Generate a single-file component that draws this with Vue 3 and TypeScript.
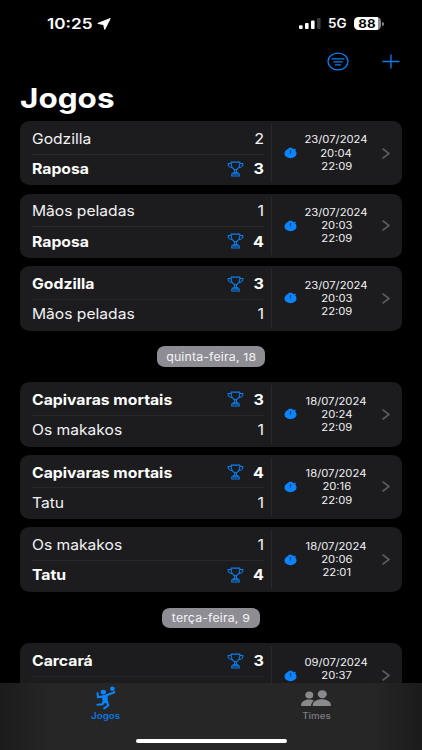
<script setup lang="ts">
interface Team {
  name: string
  score: number
  winner?: boolean
}
interface Match {
  teams: Team[]
  date: string
  start: string
  end: string
}
interface Group {
  label?: string
  matches: Match[]
}

const match = (a: Team, b: Team, date: string, start: string, end: string): Match => ({
  teams: [a, b],
  date,
  start,
  end,
})
const lost = (name: string, score: number): Team => ({ name, score })
const won = (name: string, score: number): Team => ({ name, score, winner: true })

const groups: Group[] = [
  {
    matches: [
      match(lost('Godzilla', 2), won('Raposa', 3), '23/07/2024', '20:04', '22:09'),
      match(lost('Mãos peladas', 1), won('Raposa', 4), '23/07/2024', '20:03', '22:09'),
      match(won('Godzilla', 3), lost('Mãos peladas', 1), '23/07/2024', '20:03', '22:09'),
    ],
  },
  {
    label: 'quinta-feira, 18',
    matches: [
      match(won('Capivaras mortais', 3), lost('Os makakos', 1), '18/07/2024', '20:24', '22:09'),
      match(won('Capivaras mortais', 4), lost('Tatu', 1), '18/07/2024', '20:16', '22:09'),
      match(lost('Os makakos', 1), won('Tatu', 4), '18/07/2024', '20:06', '22:01'),
    ],
  },
  {
    label: 'terça-feira, 9',
    matches: [
      match(won('Carcará', 3), lost('Tatu', 1), '09/07/2024', '20:37', '22:09'),
    ],
  },
]
</script>

<template>
  <div class="phone">
    <header class="status">
      <div class="clock">
        <span class="time">10:25</span>
        <svg class="location" viewBox="0 0 14 12"><path d="M13.2.6 7.7 11.4 6.7 6.6.8 5.4Z" /></svg>
      </div>
      <div class="indicators">
        <svg class="signal" viewBox="0 0 22 12">
          <rect x="0" y="7.3" width="3.6" height="3.7" rx="1" />
          <rect x="6" y="5" width="3.6" height="6" rx="1" />
          <rect x="12" y="2.6" width="3.6" height="8.4" rx="1" />
          <rect class="dim" x="18" y="0" width="3.6" height="11" rx="1" />
        </svg>
        <span class="network">5G</span>
        <div class="battery"><span>88</span></div>
        <i class="battery-tip"></i>
      </div>
    </header>

    <nav class="toolbar">
      <svg class="filter" viewBox="0 0 22 19">
        <ellipse cx="11" cy="9.5" rx="10" ry="8.4" />
        <path d="M5 6.8h12M6.9 9.9h8.2M8.6 12.9h4.8" />
      </svg>
      <svg class="plus" viewBox="0 0 18 15"><path d="M9 1v13M1 7.5h16" /></svg>
    </nav>

    <h1><span>Jogos</span></h1>

    <main>
      <section v-for="(group, g) in groups" :key="g">
        <div v-if="group.label" class="day"><span>{{ group.label }}</span></div>
        <article v-for="(item, m) in group.matches" :key="m" class="card">
          <div class="teams">
            <div v-for="team in item.teams" :key="team.name" class="team" :class="{ winner: team.winner }">
              <span class="name">{{ team.name }}</span>
              <svg v-if="team.winner" class="trophy" viewBox="0 0 18 16">
                <path d="M4.3.7h9.4c0 4.1-1.2 8-4.7 8S4.3 4.8 4.3.7Z" />
                <path d="M4.3 2.1H1.1c0 2.6 1.6 4.4 4.4 4.4M13.7 2.1h3.2c0 2.6-1.6 4.4-4.4 4.4" />
                <path d="M8 8.7v3.2M10 8.7v3.2M6.3 12h5.4v1.4H6.3ZM5 13.4h8v1.9H5Z" />
              </svg>
              <span class="score">{{ team.score }}</span>
            </div>
          </div>
          <div class="when">
            <svg class="stopwatch" viewBox="0 0 13 12">
              <ellipse class="body" cx="6.5" cy="6.4" rx="6" ry="4.9" />
              <path class="body" d="M4.6.7h3.8v2H4.6ZM9.2 2.6l1.4-1.2 1.4 1.1-1.200 1.300Z" />
              <path class="hand" d="M6.5 3v3.7" />
            </svg>
            <div class="times">
              <span>{{ item.date }}</span>
              <span>{{ item.start }}</span>
              <span>{{ item.end }}</span>
            </div>
            <svg class="chevron" viewBox="0 0 8 11"><path d="m1 1 6 4.500L1 10" /></svg>
          </div>
        </article>
      </section>
    </main>

    <footer class="tabs">
      <div class="tab active">
        <svg class="player" viewBox="0 0 20 24">
          <ellipse cx="16.4" cy="2.7" rx="2.4" ry="2.2" />
          <ellipse cx="7.3" cy="6.1" rx="2.7" ry="2.3" />
          <path class="limb" d="M1.5 7.2 2 11.3 7.5 10.4 12 8.7 18.4 6.2" />
          <path d="m5.8 9.8 6-1.8-.2 5.5 1 3-4.2 1-2-3.5Z" />
          <path class="limb" d="M7.8 15 6.5 18.3 1.5 18.7M11 16 12.3 19.5 8.2 22.3" />
        </svg>
        <span>Jogos</span>
      </div>
      <div class="tab">
        <svg class="people" viewBox="0 0 30 17">
          <ellipse cx="8.3" cy="5" rx="4" ry="3.5" />
          <path d="M0 15.3c0-3.3 3.5-5.900 8-5.900 2 0 3.600.5 4.900 1.300-1.800 1.300-2.800 3-2.900 5.300H.9C.3 16 0 15.800 0 15.300Z" />
          <ellipse cx="21.3" cy="4.2" rx="4.5" ry="4" />
          <path d="M11.6 15.1c0-3.5 4.1-5.900 9.200-5.900s9.200 2.400 9.200 5.900c0 .7-.4.9-1.100.9H12.700c-.7 0-1.100-.2-1.100-.9Z" />
        </svg>
        <span>Times</span>
      </div>
      <div class="home"></div>
    </footer>
  </div>
</template>

<style>
body {
  background: #000;
}
</style>

<style scoped>
.phone {
  position: relative;
  box-sizing: border-box;
  width: 422px;
  height: 750px;
  overflow: hidden;
  background: #000;
  color: #f2f2f4;
  font-family: Inter, "Liberation Sans", sans-serif;
}
svg {
  display: block;
  flex: none;
}
.status {
  display: flex;
  justify-content: space-between;
  align-items: center;
  height: 47px;
  padding: 0 38.5px 0 47px;
  color: #fff;
  font-weight: 600;
}
.clock {
  display: flex;
  align-items: center;
}
.time {
  width: 49.5px;
  font-size: 14.5px;
  line-height: 20px;
  transform: scaleX(1.18);
  transform-origin: left;
}
.location {
  width: 14px;
  height: 12px;
  fill: #fff;
  stroke: #fff;
  stroke-width: 1;
  stroke-linejoin: round;
}
.indicators {
  display: flex;
  align-items: center;
}
.signal {
  width: 22px;
  height: 12px;
  fill: #fff;
}
.signal .dim {
  fill: #39393b;
}
.network {
  width: 26px;
  margin-left: 7px;
  font-size: 12.5px;
  transform: scaleX(1.08);
  transform-origin: left;
}
.battery {
  display: flex;
  justify-content: center;
  align-items: center;
  width: 27px;
  height: 13px;
  border-radius: 4.5px;
  background: linear-gradient(90deg, #fff 89%, #8b8b8d 89%);
  color: #000;
  font-size: 11.5px;
  font-weight: 700;
}
.battery span {
  transform: scaleX(1.15) translateX(-0.5px);
}
.battery-tip {
  width: 1.5px;
  height: 4px;
  margin-left: 1px;
  border-radius: 0 2px 2px 0;
  background: #8b8b8d;
}
.toolbar {
  display: flex;
  justify-content: flex-end;
  align-items: center;
  gap: 33px;
  height: 28px;
  padding-right: 22px;
  fill: none;
  stroke: #0a7ff0;
  stroke-width: 1.3;
  stroke-linecap: round;
}
.filter {
  width: 22px;
  height: 19px;
}
.plus {
  width: 18px;
  height: 15px;
}
h1 {
  height: 46px;
  margin: 0 0 0 20px;
  color: #fff;
  font-size: 27.5px;
  font-weight: 700;
  line-height: 46px;
}
h1 span {
  display: inline-block;
  transform: scaleX(1.145);
  transform-origin: left;
}
main section {
  display: flex;
  flex-direction: column;
  gap: 8.25px;
  padding: 0 20px;
}
section + section {
  padding-top: 15.7px;
}
.day {
  display: flex;
  align-self: center;
  justify-content: center;
  align-items: center;
  height: 20.3px;
  margin-bottom: 7.25px;
  padding: 0 14px;
  border-radius: 8px / 7px;
  background: #8e8d93;
  color: #f4f4f6;
  font-size: 11px;
}
.day span {
  letter-spacing: 0.15px;
  transform: scaleX(1.12);
}
.card {
  display: flex;
  box-sizing: border-box;
  height: 64.4px;
  padding: 3px 0 3px 12px;
  border-radius: 10px / 8.5px;
  background: #1c1c1e;
}
.teams {
  box-sizing: border-box;
  flex: none;
  width: 239px;
  margin: -3px 0;
  padding: 2px 7px 0 0;
}
.team {
  display: flex;
  align-items: center;
  box-sizing: border-box;
  height: 28px;
  font-size: 14.4px;
}
.team:first-child {
  height: 31.5px;
  border-bottom: 1px solid #29292b;
}
.winner {
  color: #fff;
  font-weight: 700;
}
.name {
  transform: scaleX(1.085);
  transform-origin: left;
  white-space: nowrap;
}
.winner .name {
  transform: scaleX(1.095);
}
.trophy {
  width: 17px;
  height: 16px;
  margin-left: auto;
  fill: none;
  stroke: #0a80f2;
  stroke-width: 1.1;
  stroke-linejoin: round;
}
.score {
  width: 20px;
  margin-left: auto;
  text-align: right;
  transform: scaleX(1.12);
  transform-origin: right;
}
.trophy + .score {
  margin-left: 0;
}
.when {
  display: flex;
  align-items: center;
  box-sizing: border-box;
  width: 130px;
  padding-left: 11.5px;
  border-left: 1px solid #29292b;
}
.stopwatch {
  width: 13px;
  height: 12px;
}
.stopwatch .body {
  fill: #0a84ff;
}
.stopwatch .hand {
  fill: none;
  stroke: #10447c;
  stroke-width: 1.2;
}
.times {
  display: flex;
  flex-direction: column;
  align-items: center;
  width: 80px;
  font-size: 10px;
  line-height: 13.2px;
}
.times span {
  transform: scaleX(1.125);
}
.chevron {
  width: 8px;
  height: 11px;
  margin-left: 5.5px;
  fill: none;
  stroke: #5b5b60;
  stroke-width: 1.6;
  stroke-linecap: round;
}
.tabs {
  position: absolute;
  inset: 682.5px 0 0;
  display: grid;
  grid-template-columns: 1fr 1fr;
  background: linear-gradient(90deg, #1b1b1c, #262627 12%, #262627 88%, #1b1b1c);
}
.tab {
  display: flex;
  flex-direction: column;
  align-items: center;
  padding-right: 1px;
  color: #7d7d80;
  fill: #8a8a8d;
  font-size: 8.5px;
  font-weight: 500;
}
.tab span {
  line-height: 11px;
  transform: scaleX(1.15);
}
.active {
  padding-right: 0;
  color: #0a78e6;
  fill: #0a84ff;
  font-weight: 600;
}
.player {
  width: 20px;
  height: 24px;
  margin: 3.5px 0 1px;
}
.limb {
  fill: none;
  stroke: #0a84ff;
  stroke-width: 2.1;
  stroke-linecap: round;
  stroke-linejoin: round;
}
.people {
  width: 30px;
  height: 17px;
  margin: 7px 0 4.5px;
}
.home {
  position: absolute;
  bottom: 7px;
  left: 135.5px;
  width: 151px;
  height: 4.2px;
  border-radius: 3px;
  background: #fff;
}
</style>
